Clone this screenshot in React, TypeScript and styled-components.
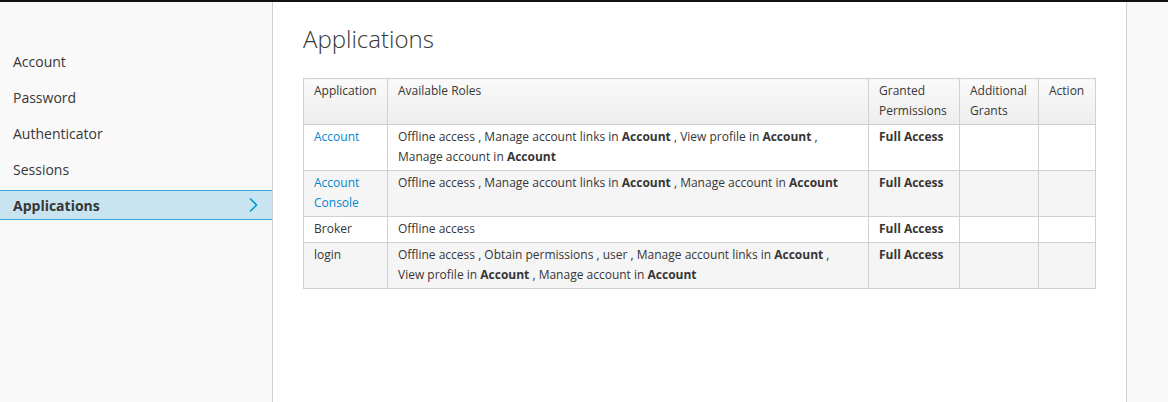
import React from 'react';
import styled, { createGlobalStyle } from 'styled-components';

const GlobalStyle = createGlobalStyle`
  html, body {
    margin: 0;
    padding: 0;
    height: 100%;
  }
  body {
    font-family: 'Open Sans', 'Liberation Sans', sans-serif;
    font-size: 12px;
    color: #363636;
    background: #f9f9f9;
  }
`;

const palette = {
  ink: '#363636',
  sidebarBg: '#f9f9f9',
  divider: '#d1d1d1',
  link: '#0088ce',
  activeBg: '#c7e4f0',
  activeBorder: '#39a5dc',
  stripe: '#f5f5f5',
};

type Role = { label: string; client?: string };

type AppRow = {
  name: string;
  link: boolean;
  roles: Role[];
};

const navItems = ['Account', 'Password', 'Authenticator', 'Sessions', 'Applications'];

const apps: AppRow[] = [
  {
    name: 'Account',
    link: true,
    roles: [
      { label: 'Offline access' },
      { label: 'Manage account links', client: 'Account' },
      { label: 'View profile', client: 'Account' },
      { label: 'Manage account', client: 'Account' },
    ],
  },
  {
    name: 'Account Console',
    link: true,
    roles: [
      { label: 'Offline access' },
      { label: 'Manage account links', client: 'Account' },
      { label: 'Manage account', client: 'Account' },
    ],
  },
  {
    name: 'Broker',
    link: false,
    roles: [{ label: 'Offline access' }],
  },
  {
    name: 'login',
    link: false,
    roles: [
      { label: 'Offline access' },
      { label: 'Obtain permissions' },
      { label: 'user' },
      { label: 'Manage account links', client: 'Account' },
      { label: 'View profile', client: 'Account' },
      { label: 'Manage account', client: 'Account' },
    ],
  },
];

const Page = styled.div`
  display: flex;
  flex-direction: column;
  height: 100vh;
  border-top: 2px solid #111;
  box-sizing: border-box;
`;

const Body = styled.div`
  flex: 1;
  display: flex;
`;

const Sidebar = styled.nav`
  width: 272px;
  flex-shrink: 0;
  background: ${palette.sidebarBg};
  border-right: 1px solid ${palette.divider};
  padding-top: 44px;
`;

const NavList = styled.ul`
  list-style: none;
  margin: 0;
  padding: 0;
`;

const NavItem = styled.li<{ $active?: boolean }>`
  height: 30px;
  margin-bottom: 6px;
  box-sizing: border-box;
  display: flex;
  align-items: center;
  justify-content: space-between;
  padding: 0 13px;
  font-size: 14px;
  color: ${palette.ink};
  font-weight: ${(p) => (p.$active ? 700 : 400)};
  background: ${(p) => (p.$active ? palette.activeBg : 'transparent')};
  border-top: 1px solid ${(p) => (p.$active ? palette.activeBorder : 'transparent')};
  border-bottom: 1px solid ${(p) => (p.$active ? palette.activeBorder : 'transparent')};
  cursor: pointer;
`;

const Chevron = styled.svg`
  width: 10px;
  height: 16px;
  margin-right: 1px;
`;

const Main = styled.main`
  width: 854px;
  flex-shrink: 0;
  background: #fff;
  border-right: 1px solid ${palette.divider};
  padding: 0 30px;
  box-sizing: border-box;
`;

const Title = styled.h1`
  margin: 22px 0 24px;
  font-size: 24px;
  font-weight: 300;
  line-height: 30px;
  color: ${palette.ink};
`;

const Table = styled.table`
  width: 792px;
  border-collapse: collapse;
  border: 1px solid ${palette.divider};
  table-layout: fixed;
`;

const HeadCell = styled.th<{ $width: number }>`
  box-sizing: border-box;
  width: ${(p) => p.$width}px;
  text-align: left;
  vertical-align: top;
  font-weight: 400;
  line-height: 20px;
  padding: 2px 10px 3px;
  border: 1px solid ${palette.divider};
  background: linear-gradient(to bottom, #fafafa 0%, #ededed 100%);
  height: 46px;
`;

const Row = styled.tr<{ $striped: boolean }>`
  background: ${(p) => (p.$striped ? palette.stripe : '#fff')};
`;

const Cell = styled.td`
  vertical-align: top;
  line-height: 20px;
  padding: 2px 10px 3px;
  border: 1px solid ${palette.divider};
`;

const AppLink = styled.a`
  color: ${palette.link};
  text-decoration: none;
`;

const Right = styled.div`
  flex: 1;
  background: ${palette.sidebarBg};
`;

const columns = [
  { key: 'app', label: 'Application', width: 84 },
  { key: 'roles', label: 'Available Roles', width: 481 },
  { key: 'granted', label: 'Granted Permissions', width: 91 },
  { key: 'grants', label: 'Additional Grants', width: 79 },
  { key: 'action', label: 'Action', width: 57 },
];

const RoleList = ({ roles }: { roles: Role[] }) => (
  <>
    {roles.map((role, i) => (
      <React.Fragment key={i}>
        {role.label}
        {role.client && (
          <>
            {' in '}
            <strong>{role.client}</strong>
          </>
        )}
        {i < roles.length - 1 ? ' , ' : ''}
      </React.Fragment>
    ))}
  </>
);

const App = () => (
  <>
    <GlobalStyle />
    <Page>
      <Body>
        <Sidebar>
          <NavList>
            {navItems.map((item) => {
              const active = item === 'Applications';
              return (
                <NavItem key={item} $active={active}>
                  {item}
                  {active && (
                    <Chevron viewBox="0 0 10 16">
                      <polyline
                        points="2,1.5 8.5,8 2,14.5"
                        fill="none"
                        stroke="#0099d3"
                        strokeWidth="1.6"
                      />
                    </Chevron>
                  )}
                </NavItem>
              );
            })}
          </NavList>
        </Sidebar>

        <Main>
          <Title>Applications</Title>
          <Table>
            <thead>
              <tr>
                {columns.map((col) => (
                  <HeadCell key={col.key} $width={col.width}>
                    {col.label}
                  </HeadCell>
                ))}
              </tr>
            </thead>
            <tbody>
              {apps.map((app, i) => (
                <Row key={app.name} $striped={i % 2 === 1}>
                  <Cell>
                    {app.link ? <AppLink href="#">{app.name}</AppLink> : app.name}
                  </Cell>
                  <Cell>
                    <RoleList roles={app.roles} />
                  </Cell>
                  <Cell>
                    <strong>Full Access</strong>
                  </Cell>
                  <Cell />
                  <Cell />
                </Row>
              ))}
            </tbody>
          </Table>
        </Main>

        <Right />
      </Body>
    </Page>
  </>
);

export default App;
